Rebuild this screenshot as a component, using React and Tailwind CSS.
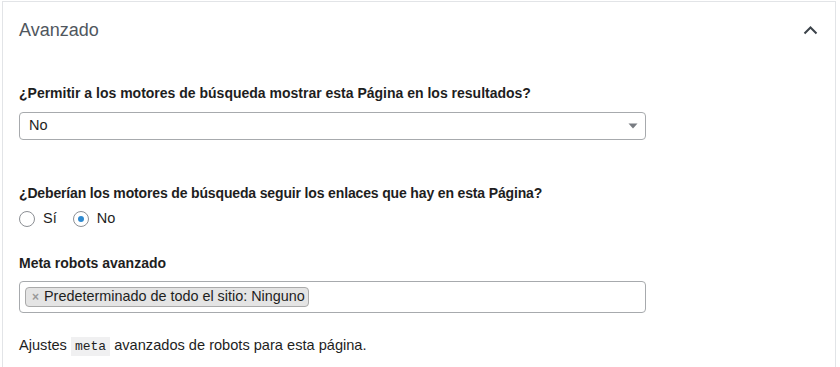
import React, { useState } from "react";

const Avanzado = () => {
  const [follow, setFollow] = useState("no");
  const [open, setOpen] = useState(true);

  return (
    <div className="w-[840px] h-[367px] bg-white pt-px pl-[2px] overflow-hidden font-['Liberation_Sans',Arial,sans-serif] text-[#1e1e1e]">
      <div className="w-[834px] h-[400px] border-l border-t border-r border-[#e2e4e7]">
        <div className="h-14 flex items-center justify-between px-4">
          <h2 className="text-[18px] text-[#50575e]">Avanzado</h2>
          <button onClick={() => setOpen(!open)} className="w-[16px] h-[10px] flex items-center justify-center">
            <svg width="16" height="10" viewBox="0 0 16 10" fill="none">
              <path d="M1.5 8.5 L7.5 2.5 L13.5 8.5" stroke="#3c434a" strokeWidth="2" />
            </svg>
          </button>
        </div>

        <div className="px-4">
          <p className="mt-[25px] text-[14px] leading-5 font-bold">
            ¿Permitir a los motores de búsqueda mostrar esta Página en los resultados?
          </p>
          <div className="mt-[9px] w-[627px] h-[28px] border border-[#a7aaad] rounded-[4px] flex items-center justify-between pl-[9px] pr-[7px]">
            <span className="text-[14.5px]">No</span>
            <svg width="10" height="6" viewBox="0 0 10 6">
              <path d="M0.5 0.5 L9.5 0.5 L5 5.5 Z" fill="#787c82" />
            </svg>
          </div>

          <p className="mt-[43px] text-[14px] leading-5 font-bold tracking-[-0.15px]">
            ¿Deberían los motores de búsqueda seguir los enlaces que hay en esta Página?
          </p>
          <div className="mt-[6px] h-5 flex items-center text-[14.5px]">
            {[
              ["yes", "Sí"],
              ["no", "No"],
            ].map(([val, label]) => (
              <label key={val} className="flex items-center mr-4 cursor-pointer" onClick={() => setFollow(val)}>
                <span className="w-4 h-4 rounded-full border border-[#8c8f94] flex items-center justify-center">
                  {follow === val && <span className="w-[6px] h-[6px] rounded-full bg-[#2f8ad0]" />}
                </span>
                <span className="ml-2">{label}</span>
              </label>
            ))}
          </div>

          <p className="mt-[24px] text-[14px] leading-5 font-bold">Meta robots avanzado</p>
          <div className="mt-[8px] w-[627px] h-[32px] border border-[#a7aaad] rounded-[4px] flex items-center pl-[5px]">
            <span className="h-[20px] flex items-center bg-[#e4e4e4] border border-[#aaaaaa] rounded-[4px] pl-[6px] pr-[3px] text-[14.4px]">
              <span className="text-[#999] font-bold text-[12px] mr-[5px]">×</span>
              Predeterminado de todo el sitio: Ninguno
            </span>
          </div>

          <p className="mt-[22px] text-[14.6px] leading-[21px]">
            Ajustes{" "}
            <code className="font-['Liberation_Mono',monospace] text-[13px] bg-[#f0f0f1] px-1 py-[2px]">meta</code>{" "}
            avanzados de robots para esta página.
          </p>
        </div>
      </div>
    </div>
  );
};

export default function App() {
  return <Avanzado />;
}
